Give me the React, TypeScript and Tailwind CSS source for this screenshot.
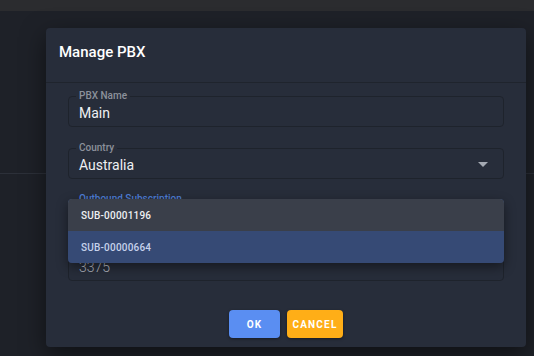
import React from "react";

type Field = {
  label: string;
  value: string;
  select?: boolean;
  focused?: boolean;
  dim?: boolean;
};

const fields: Field[] = [
  { label: "PBX Name", value: "Main" },
  { label: "Country", value: "Australia", select: true },
  { label: "Outbound Subscription", value: "", focused: true },
  { label: "", value: "3375", dim: true },
];

const options = [
  { id: "SUB-00001196", selected: false },
  { id: "SUB-00000664", selected: true },
];

const font = { fontFamily: "Roboto, 'Liberation Sans', sans-serif" };

const OutlinedField = ({ field }: { field: Field }) => (
  <div
    className={`relative h-[31px] rounded-[4px] border ${
      field.focused ? "border-[#4f7fd8]" : "border-[#1e232c]"
    } flex items-center pl-[10px] pr-[14px] pt-[2px]`}
  >
    {field.label && (
      <span
        className={`absolute left-[7px] top-[-7px] px-[3px] bg-[#272d3a] text-[10px] leading-[12px] font-medium ${
          field.focused ? "text-[#4f7fd8]" : "text-[#8c919b]"
        }`}
      >
        {field.label}
      </span>
    )}
    <span
      className={`flex-1 text-[14px] leading-[18px] ${
        field.dim ? "text-[#b9bdc5] font-light" : "text-[#eef0f3]"
      }`}
    >
      {field.value}
    </span>
    {field.select && (
      <svg width="10" height="5" viewBox="0 0 10 5" className="mr-[1px]">
        <path d="M0 0h10L5 5z" fill="#a4a9b2" />
      </svg>
    )}
  </div>
);

export default function App() {
  return (
    <div className="relative w-[534px] h-[356px] overflow-hidden bg-[#1e2128]" style={font}>
      <div className="h-[11px] bg-[#2b2c2f]" />
      <div className="h-[163px] border-b border-[#2c3039]" />

      <div className="absolute left-[46px] top-[28px] w-[480px] h-[319px] rounded-[4px] bg-[#272d3a] shadow-[0_8px_24px_rgba(0,0,0,0.5)] flex flex-col">
        <div className="h-[55px] px-[13px] pt-[14px] border-b border-[#1f242d]">
          <h2 className="text-[15px] leading-[20px] font-medium text-white">Manage PBX</h2>
        </div>

        <div className="relative px-[22px] pt-[13px] flex flex-col gap-[20px]">
          {fields.map((f, i) => (
            <div key={f.label + f.value} className={i === 1 ? "mt-[1px]" : ""}>
              <OutlinedField field={f} />
            </div>
          ))}

          <div className="absolute left-[22px] right-[22px] top-[116px] rounded-[4px] overflow-hidden shadow-[0_4px_12px_rgba(0,0,0,0.45)]">
            {options.map((o) => (
              <div
                key={o.id}
                className={`h-[32px] flex items-center pl-[13px] text-[10px] font-medium tracking-[0.2px] ${
                  o.selected ? "bg-[#364a75] text-[#c6d2ec]" : "bg-[#3a3f4a] text-[#eef0f3]"
                }`}
              >
                {o.id}
              </div>
            ))}
          </div>
        </div>

        <div className="mt-[29px] flex justify-center gap-[7px]">
          <button className="w-[51px] h-[28px] rounded-[4px] bg-[#5a8ef2] text-white text-[10px] font-bold tracking-[1.2px] shadow-[0_1px_3px_rgba(0,0,0,0.4)]">
            OK
          </button>
          <button className="w-[56px] h-[28px] rounded-[4px] bg-[#ffae17] text-white text-[10px] font-bold tracking-[1.2px] shadow-[0_1px_3px_rgba(0,0,0,0.4)]">
            CANCEL
          </button>
        </div>
      </div>
    </div>
  );
}
